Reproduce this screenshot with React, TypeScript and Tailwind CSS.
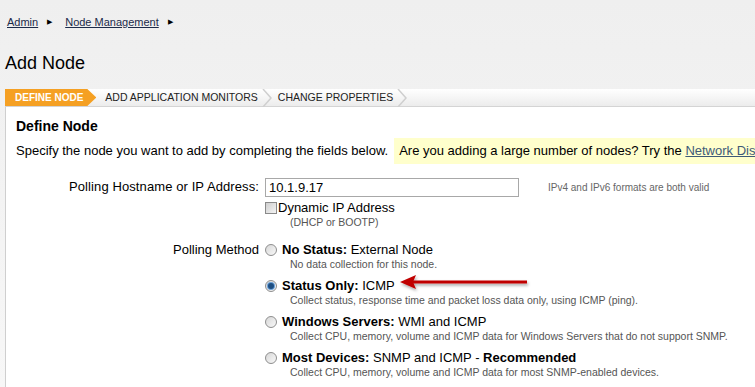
import React from "react";

const font = { fontFamily: '"Liberation Sans", Arial, sans-serif' };

function Crumb({ label }: { label: string }) {
  return (
    <span className="flex items-center">
      <a className="text-[11px] text-[#1c2b4a] underline underline-offset-1">{label}</a>
      <span className="ml-[9px] mr-[13px] text-[7px] text-black">&#9654;</span>
    </span>
  );
}

function Chevron() {
  return (
    <svg width="12" height="18" viewBox="0 0 12 18" className="shrink-0">
      <path d="M1 0 L9 9 L1 18" fill="none" stroke="#cfcfcf" strokeWidth="1.5" />
    </svg>
  );
}

function Radio({ checked }: { checked?: boolean }) {
  return (
    <span className="relative inline-block w-[12px] h-[12px] rounded-full border border-[#8e8e8e] bg-gradient-to-br from-[#d8d8d8] to-[#f8f8f8] shrink-0">
      {checked && (
        <span className="absolute left-[2px] top-[2px] w-[6px] h-[6px] rounded-full bg-[#1f4f82] ring-1 ring-[#6aa0d8]" />
      )}
    </span>
  );
}

function Option({
  checked,
  title,
  rest,
  desc,
  tail,
}: {
  checked?: boolean;
  title: string;
  rest: string;
  desc: string;
  tail?: string;
}) {
  return (
    <div className="mb-[7px]">
      <div className="flex items-center gap-[5px] text-[13px] leading-[16px] text-black">
        <Radio checked={checked} />
        <span>
          <b>{title}</b> {rest}
          {tail && <b>{tail}</b>}
        </span>
      </div>
      <div className="pl-[25px] text-[10.5px] leading-[13px] text-[#555]">{desc}</div>
    </div>
  );
}

export default function App() {
  return (
    <div
      className="relative w-[755px] h-[387px] overflow-hidden bg-gradient-to-b from-[#efefef] to-[#f7f7f7]"
      style={font}
    >
      {/* breadcrumb */}
      <div className="flex items-center pl-[7px] pt-[15px] h-[30px]">
        <Crumb label="Admin" />
        <Crumb label="Node Management" />
      </div>

      <h1 className="pl-[5px] mt-[22px] text-[18px] leading-[22px] text-black">Add Node</h1>

      {/* tabs */}
      <div className="ml-[5px] mt-[15px] flex items-center h-[18px] bg-gradient-to-b from-white to-[#ececec] border-b border-[#d4d4d4] text-[10.5px]">
        <div
          className="h-full flex items-center pl-[10px] pr-[13px] bg-[#f5a023] text-white font-bold text-[10px]"
          style={{ clipPath: "polygon(0 0, calc(100% - 9px) 0, 100% 50%, calc(100% - 9px) 100%, 0 100%)" }}
        >
          DEFINE NODE
        </div>
        <div className="h-full flex items-center pl-[9px] text-[#222]">ADD APPLICATION MONITORS</div>
        <span className="ml-[4px]"><Chevron /></span>
        <div className="h-full flex items-center pl-[4px] text-[#222]">CHANGE PROPERTIES</div>
        <span className="ml-[4px]"><Chevron /></span>
      </div>

      {/* panel */}
      <div className="ml-[5px] border-l border-[#cfcfcf] bg-white h-[300px] pl-[10px] pt-[10px]">
        <h2 className="text-[14px] leading-[18px] font-bold text-black">Define Node</h2>
        <div className="flex items-center mt-[3px] text-[13px] text-black whitespace-nowrap">
          <span>Specify the node you want to add by completing the fields below.</span>
          <span className="ml-[6px] h-[26px] flex items-center pl-[5px] bg-[#ffffcc] flex-1">
            Are you adding a large number of nodes? Try the&nbsp;
            <a className="underline text-[#3e5a78]">Network Discovery</a>
          </span>
        </div>

        <div className="grid grid-cols-[243px_1fr] gap-x-[6px] mt-[14px] text-[13px] text-black">
          <div className="text-right leading-[18px] tracking-[0.1px]">Polling Hostname or IP Address:</div>
          <div>
            <div className="flex items-center">
              <div className="w-[254px] h-[19px] border border-[#a8a8a8] bg-white pl-[3px] leading-[17px]">10.1.9.17</div>
              <span className="ml-[29px] text-[10px] text-[#666]">IPv4 and IPv6 formats are both valid</span>
            </div>
            <div className="flex items-center mt-[3px] leading-[16px]">
              <span className="w-[12px] h-[12px] border border-[#8a8a8a] bg-gradient-to-br from-[#cfcfcf] to-[#f4f4f4] mr-[1px]" />
              <span>Dynamic IP Address</span>
            </div>
            <div className="pl-[25px] text-[10.5px] leading-[12px] text-[#555]">(DHCP or BOOTP)</div>
          </div>

          <div className="text-right leading-[16px] mt-[14px]">Polling Method</div>
          <div className="mt-[14px]">
            <Option title="No Status:" rest="External Node" desc="No data collection for this node." />
            <Option
              checked
              title="Status Only:"
              rest="ICMP"
              desc="Collect status, response time and packet loss data only, using ICMP (ping)."
            />
            <Option
              title="Windows Servers:"
              rest="WMI and ICMP"
              desc="Collect CPU, memory, volume and ICMP data for Windows Servers that do not support SNMP."
            />
            <Option
              title="Most Devices:"
              rest="SNMP and ICMP - "
              tail="Recommended"
              desc="Collect CPU, memory, volume and ICMP data for most SNMP-enabled devices."
            />
          </div>
        </div>
      </div>

      {/* annotation arrow */}
      <svg className="absolute left-[398px] top-[274px]" width="135" height="20" viewBox="0 0 135 20">
        <defs>
          <filter id="sh" x="-10%" y="-50%" width="120%" height="200%">
            <feDropShadow dx="1" dy="2" stdDeviation="1.5" floodColor="#000" floodOpacity="0.35" />
          </filter>
        </defs>
        <g filter="url(#sh)">
          <line x1="14" y1="8" x2="129" y2="8" stroke="#c00000" strokeWidth="3" />
          <path d="M2 8 L18 1 L15 8 L18 15 Z" fill="#c00000" />
        </g>
      </svg>
    </div>
  );
}
